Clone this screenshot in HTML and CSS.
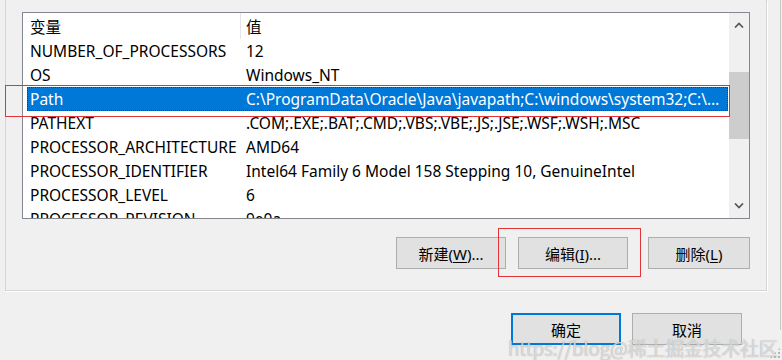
FILE: index.html
```html
<!DOCTYPE html>
<html lang="zh">
<head>
<meta charset="utf-8">
<link rel="stylesheet" href="styles.css">
</head>
<body>
<div class="dialog">
  <div class="group">
    <div class="listview">
      <div class="list">
        <div class="row header">
          <div class="c1">变量</div>
          <div class="c2 sep">值</div>
        </div>
        <div class="row"><div class="c1">NUMBER_OF_PROCESSORS</div><div class="c2">12</div></div>
        <div class="row"><div class="c1">OS</div><div class="c2">Windows_NT</div></div>
        <div class="row selected"><div class="c1">Path</div><div class="c2">C:\ProgramData\Oracle\Java\javapath;C:\windows\system32;C:\windows;C:\windows\System32\Wbem</div></div>
        <div class="row"><div class="c1">PATHEXT</div><div class="c2">.COM;.EXE;.BAT;.CMD;.VBS;.VBE;.JS;.JSE;.WSF;.WSH;.MSC</div></div>
        <div class="row"><div class="c1">PROCESSOR_ARCHITECTURE</div><div class="c2">AMD64</div></div>
        <div class="row"><div class="c1">PROCESSOR_IDENTIFIER</div><div class="c2">Intel64 Family 6 Model 158 Stepping 10, GenuineIntel</div></div>
        <div class="row"><div class="c1">PROCESSOR_LEVEL</div><div class="c2">6</div></div>
        <div class="row"><div class="c1">PROCESSOR_REVISION</div><div class="c2">9e0a</div></div>
      </div>
      <div class="scrollbar">
        <div class="sb-btn">
          <svg width="10" height="6" viewBox="0 0 10 6"><path d="M1 5.5 L5 1.5 L9 5.5" fill="none" stroke="#555" stroke-width="1.7"/></svg>
        </div>
        <div class="sb-track">
          <div class="sb-thumb"></div>
        </div>
        <div class="sb-btn">
          <svg width="10" height="6" viewBox="0 0 10 6"><path d="M1 0.5 L5 4.5 L9 0.5" fill="none" stroke="#555" stroke-width="1.7"/></svg>
        </div>
      </div>
    </div>
    <div class="btnrow">
      <button class="btn w110">新建(<u>W</u>)...</button>
      <button class="btn w110 ml12">编辑(<u>I</u>)...</button>
      <button class="btn w102 ml20">删除(<u>L</u>)</button>
    </div>
  </div>
  <div class="okrow">
    <button class="btn w110 default">确定</button>
    <button class="btn w110 ml11">取消</button>
  </div>
  <div class="mark mark-path"></div>
  <div class="mark mark-edit"></div>
  <div class="watermark">https://blog@稀土掘金技术社区</div>
  <div class="grip"></div>
  <div class="edge"></div>
</div>
</body>
</html>
```
FILE: styles.css
```css
* { box-sizing: border-box; }
html, body {
  margin: 0;
  padding: 0;
  background: #f0f0f0;
}
body {
  font-family: "Noto Sans", "Noto Sans CJK SC", sans-serif;
  font-size: 15.5px;
  color: #000;
}
.dialog {
  position: relative;
  width: 782px;
  height: 360px;
  overflow: hidden;
}
.group {
  margin-left: 5px;
  width: 762px;
  border: 1px solid #d5d5d5;
  border-top: none;
  box-shadow: 1px 1px 0 #ffffff;
  padding: 12px 16px 21px 16px;
}
.listview {
  display: flex;
  width: 728px;
  height: 207px;
  border: 1px solid #828790;
  background: #fff;
}
.list {
  flex: 1;
  min-width: 0;
  padding-left: 4px;
  overflow: hidden;
}
.row {
  display: flex;
  height: 24px;
  line-height: 24px;
  white-space: nowrap;
}
.row.header {
  height: 26px;
  line-height: 28px;
}
.c1 {
  width: 213px;
  flex: none;
  padding-left: 3px;
  overflow: hidden;
}
.c2 {
  flex: 1;
  min-width: 0;
  padding-left: 6px;
  padding-right: 8px;
  overflow: hidden;
  text-overflow: ellipsis;
}
.c2.sep {
  border-left: 1px solid #e5e5e5;
  padding-left: 5px;
}
.row.selected {
  background: #0078d7;
  color: #fff;
  outline: 1px dotted #1d3f66;
  outline-offset: -1px;
  margin-right: 1px;
}
.scrollbar {
  width: 20px;
  flex: none;
  background: #f0f0f0;
  display: flex;
  flex-direction: column;
}
.sb-btn {
  height: 24px;
  display: flex;
  align-items: center;
  justify-content: center;
}
.sb-track {
  flex: 1;
  padding-top: 35px;
}
.sb-thumb {
  height: 67px;
  background: #cdcdcd;
}
.btnrow {
  display: flex;
  justify-content: flex-end;
  margin-top: 18px;
}
.btn {
  height: 32px;
  background: #e1e1e1;
  border: 1px solid #adadad;
  font-family: "Noto Sans", "Noto Sans CJK SC", sans-serif;
  font-size: 15px;
  color: #000;
  padding: 0;
  border-radius: 0;
}
.btn u { text-underline-offset: 2px; }
.w110 { width: 110px; }
.w102 { width: 102px; }
.ml12 { margin-left: 12px; }
.ml20 { margin-left: 20px; }
.ml11 { margin-left: 11px; }
.btn.default {
  border: 2px solid #0078d7;
}
.okrow {
  display: flex;
  justify-content: flex-end;
  padding-right: 40px;
  margin-top: 22px;
}
.mark {
  position: absolute;
  border: 1px solid #e0343a;
}
.mark-path {
  left: 5px;
  top: 85px;
  width: 725px;
  height: 32px;
}
.mark-edit {
  left: 498px;
  top: 228px;
  width: 143px;
  height: 49px;
}
.watermark {
  position: absolute;
  left: 508px;
  top: 336px;
  font-family: "Noto Sans CJK SC", sans-serif;
  font-size: 19px;
  line-height: 24px;
  color: rgba(235, 235, 235, 0.75);
  text-shadow: 0 0 1px rgba(120, 120, 120, 0.7);
  white-space: nowrap;
  letter-spacing: -0.3px;
}
.grip {
  position: absolute;
  right: 1px;
  bottom: 1px;
  width: 12px;
  height: 12px;
  background-image: radial-gradient(circle, #b5b5b5 1px, transparent 1.2px);
  background-size: 4px 4px;
  clip-path: polygon(100% 0, 100% 100%, 0 100%);
}
.edge {
  position: absolute;
  right: 1px;
  top: 0;
  width: 1px;
  height: 330px;
  background: #c8c8c8;
}
```
